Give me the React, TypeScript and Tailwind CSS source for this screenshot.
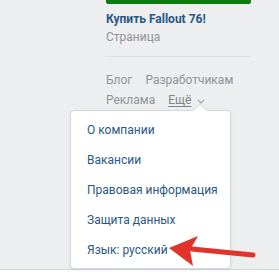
import React from "react";

const MENU = ["О компании", "Вакансии", "Правовая информация", "Защита данных", "Язык: русский"];

export default function App() {
  return (
    <div className="w-[279px] h-[275px] bg-white overflow-hidden font-['Roboto','Open_Sans',sans-serif] text-[12px]">
      <div className="relative h-[270px] bg-[#edeef0] border-b border-[#d3d9de]">
        {/* right column */}
        <div className="ml-[106px] w-[145px]">
          <div className="h-[4px] bg-[#0c7d0c] rounded-b-[2px]" />
          <div className="mt-[6px] leading-[18px] font-bold text-[#2a5885]">Купить Fallout 76!</div>
          <div className="leading-[18px] text-[#939393]">Страница</div>
          <div className="mt-[10px] border-t border-[#dce1e6]" />

          {/* footer links */}
          <div className="mt-[13px] flex flex-wrap gap-x-[13px] leading-[20px] text-[#939393]">
            <span>Блог</span>
            <span>Разработчикам</span>
            <span>Реклама</span>
            <span className="flex items-center gap-[6px]">
              <span className="underline underline-offset-2 text-[#828282]">Ещё</span>
              <svg width="8" height="5" viewBox="0 0 8 5" className="mt-[2px]">
                <path d="M1 1l3 3 3-3" fill="none" stroke="#a0a8b2" strokeWidth="1.2" />
              </svg>
            </span>
          </div>
        </div>

        {/* dropdown */}
        <div className="absolute left-[70px] top-[110px] w-[161px] bg-white border border-[#d3d9de] rounded-[4px] shadow-[0_1px_3px_rgba(0,0,0,0.08)] pt-[4px] pb-[3px]">
          <div className="absolute -top-[6px] left-[124px] w-[10px] h-[10px] bg-white border-l border-t border-[#d3d9de] rotate-45" />
          {MENU.map((item) => (
            <div key={item} className="relative h-[30px] flex items-center pl-[16px] text-[#2a5885] whitespace-nowrap">
              {item}
            </div>
          ))}
        </div>

        {/* red arrow */}
        <svg className="absolute left-0 top-0" width="279" height="270" viewBox="0 0 279 270">
          <path d="M192 249 L253 255" stroke="#e0342b" strokeWidth="5" strokeLinecap="round" />
          <path d="M169 248 L198 236 L190 250 L193 266 Z" fill="#e0342b" />
        </svg>
      </div>
    </div>
  );
}
